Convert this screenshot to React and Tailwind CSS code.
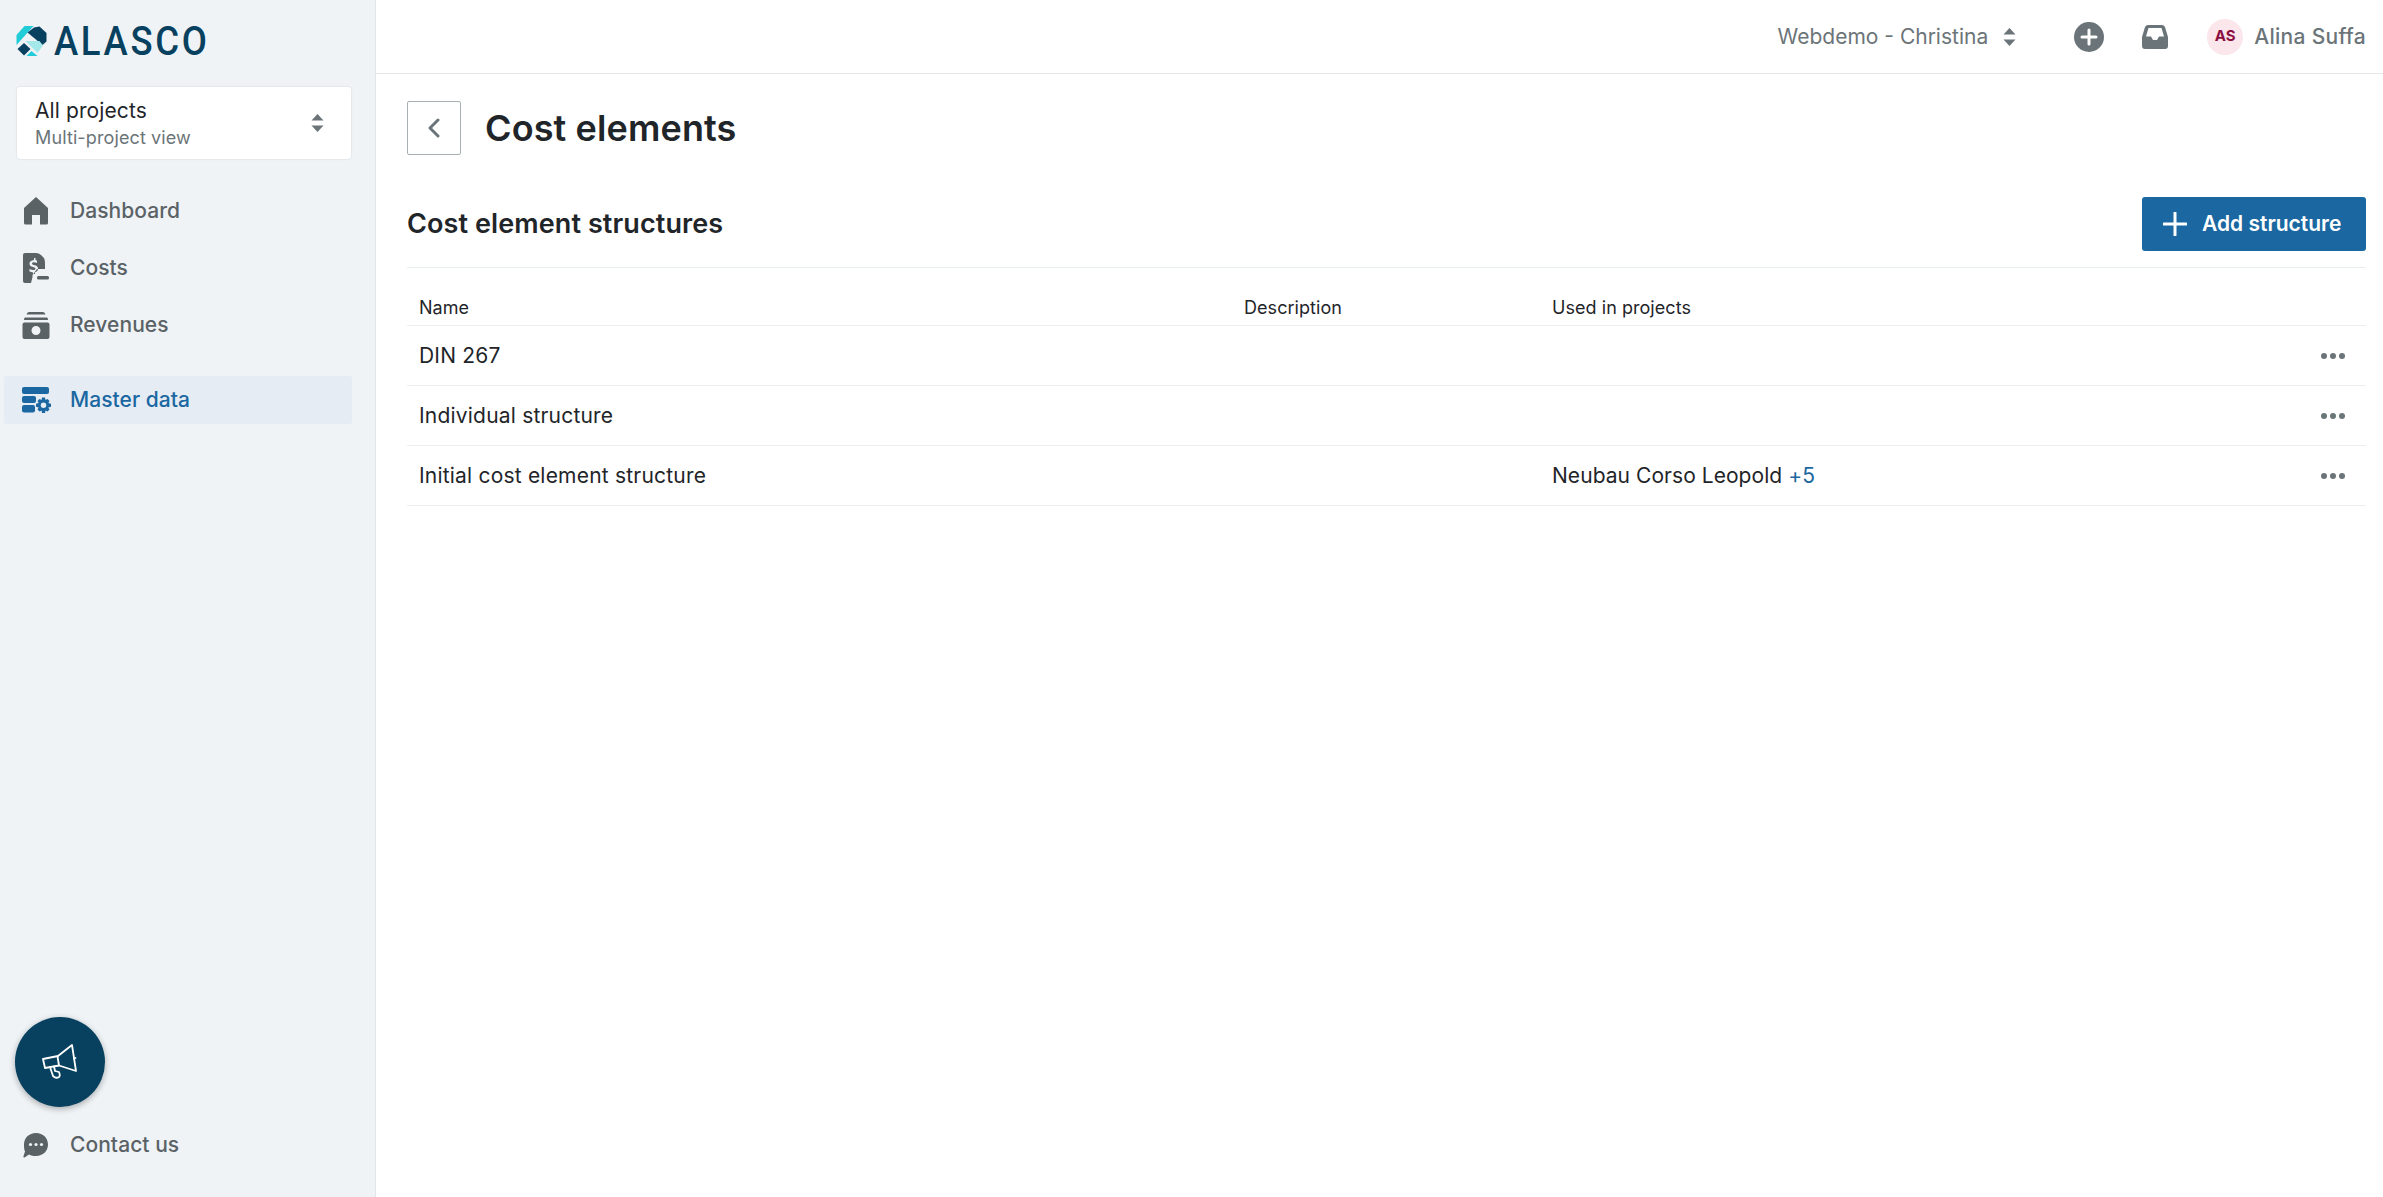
import React from "react";

const font = { fontFamily: "Inter, 'Liberation Sans', sans-serif" };

function Logo() {
  return (
    <div className="flex items-center h-[30px] gap-[7px]">
      <svg width="31" height="30" viewBox="0 0 30 30">
        <polygon points="0,9 8,0 17,0 0,19" fill="#22ccd6" />
        <polygon points="17.5,1.5 23,0.5 30,7 30,15.5 26,19 11,6.5" fill="#07415f" />
        <polygon points="9,15 23,15 26.5,19.5 21,27" fill="#a5e8ea" />
        <polygon points="1,23 7.5,17 14,23 7.5,29.5" fill="#07415f" />
        <polygon points="10,30 15,25 21,30" fill="#22ccd6" />
      </svg>
      <span className="font-['Roboto'] font-medium text-[41px] leading-[30px] tracking-[3px] scale-x-[0.89] origin-left text-[#07415f]">ALASCO</span>
    </div>
  );
}

function Updown({ className }) {
  return (
    <svg className={className} width="13" height="18" viewBox="0 0 13 18" fill="currentColor">
      <path d="M6.5 0 L12.5 6.5 H0.5 Z" />
      <path d="M0.5 11.5 H12.5 L6.5 18 Z" />
    </svg>
  );
}

function HomeIcon() {
  return (
    <svg width="26" height="28" viewBox="0 0 26 28" fill="currentColor">
      <path d="M13 0 L25 11 V26 Q25 27.5 23.500 27.500 H17 V18 H9 V27.500 H2.500 Q1 27.500 1 26 V11 Z" />
    </svg>
  );
}

function CostIcon() {
  return (
    <svg width="26" height="30" viewBox="0 0 26 30" fill="currentColor">
      <path fillRule="evenodd" d="M2 0 H13 Q16 0 18 2 L21 5 Q22 7 22 10 V16 H14 L9.500 22 V24 L8 30 H2 Q0 30 0 28 V2 Q0 0 2 0 Z M11 5 V7 Q6.500 7.500 6.500 10.500 Q6.500 13.500 10 14 Q12.500 14.500 12.500 15.800 Q12.500 17 10.500 17 Q8.500 17 6.500 16 V18.500 Q8.500 19.300 10 19.400 V21 H12 V19.300 Q15 18.500 15 15.800 Q15 13 12 12.300 Q9 11.700 9 10.400 Q9 9.300 10.800 9.300 Q12.500 9.300 14 10 V7.800 Q13 7.200 12.500 7.100 V5 Z" />
      <rect x="14" y="23" width="12" height="3.500" rx="1.500" />
    </svg>
  );
}

function RevenueIcon() {
  return (
    <svg width="28" height="27" viewBox="0 0 28 27" fill="currentColor">
      <path d="M7 0 H21 Q23 0 23.500 2.500 H4.500 Q5 0 7 0 Z" />
      <path d="M3 5.500 H25 Q26 5.500 26 8 H2 Q2 5.500 3 5.500 Z" />
      <path fillRule="evenodd" d="M2.500 10.500 H25.500 Q27.500 10.500 27.500 12.500 V25 Q27.500 27 25.500 27 H2.500 Q0.500 27 0.500 25 V12.500 Q0.500 10.500 2.500 10.500 Z M14 14 A4.500 4.500 0 1 0 14 23 A4.500 4.500 0 1 0 14 14 Z" />
    </svg>
  );
}

function MasterIcon() {
  return (
    <svg width="30" height="26" viewBox="0 0 30 26" fill="currentColor">
      <rect x="1" y="0" width="27" height="7" rx="2" />
      <rect x="1" y="9" width="14" height="7" rx="2" />
      <rect x="1" y="18" width="13" height="7.500" rx="2" />
      <path fillRule="evenodd" d="M21 10.500 H24 L24.500 13 L26.500 12 L28.500 14 L27.300 16 L30 16.800 V19.700 L27.300 20.500 L28.500 22.500 L26.500 24.500 L24.500 23.500 L24 26 H21 L20.500 23.500 L18.500 24.500 L16.500 22.500 L17.700 20.500 L15 19.700 V16.800 L17.700 16 L16.500 14 L18.500 12 L20.500 13 Z M22.500 15.500 A2.700 2.700 0 1 0 22.500 21 A2.700 2.700 0 1 0 22.500 15.500 Z" />
    </svg>
  );
}

function ChatIcon() {
  return (
    <svg width="26" height="25" viewBox="0 0 26 25" fill="currentColor">
      <path fillRule="evenodd" d="M13 0 C20 0 25 5 25 11.500 C25 18 20 23 13 23 C10.500 23 8 22.500 6 21.500 L1.500 24.500 Q0 24.800 0.500 23 L2 18.500 C1 16.500 1 14 1 11.500 C1 5 6 0 13 0 Z" />
      <circle cx="7.500" cy="11.500" r="1.600" fill="#eff3f6" />
      <circle cx="13" cy="11.500" r="1.600" fill="#eff3f6" />
      <circle cx="18.500" cy="11.500" r="1.600" fill="#eff3f6" />
    </svg>
  );
}

function Megaphone() {
  return (
    <svg width="36" height="36" viewBox="0 0 36 36" fill="none" stroke="#fff" strokeWidth="1.800" strokeLinejoin="round" strokeLinecap="round">
      <path d="M1 15 L16 12 L30 1 L34 27 L17 21.500 L3 24 Z" />
      <path d="M15.500 12.500 L17 21.500" />
      <path d="M32 14.500 L33.500 14" />
      <path d="M8 23 L11 32 Q14 35 17 33 Q18.500 31.500 17 28 L13 27 L12 22.500" />
    </svg>
  );
}

function NavItem({ icon, label, active }) {
  return (
    <div className={`flex items-center h-12 ml-[4px] w-[348px] rounded-[3px] ${active ? "bg-[#e5ecf3] text-[#1a67a1]" : "text-[#5a6266]"}`}>
      <span className="w-[66px] flex justify-center pr-[2px]">{icon}</span>
      <span className="text-[21px] font-medium tracking-[0.05px]">{label}</span>
    </div>
  );
}

function Dots() {
  return (
    <svg width="24" height="6" viewBox="0 0 24 6" fill="#6b7478">
      <circle cx="3" cy="3" r="3" />
      <circle cx="12" cy="3" r="3" />
      <circle cx="21" cy="3" r="3" />
    </svg>
  );
}

const rows = [
  { name: "DIN 267" },
  { name: "Individual structure" },
  { name: "Initial cost element structure", used: "Neubau Corso Leopold", more: "+5" },
];

export default function App() {
  return (
    <div className="flex h-[1197px] w-full bg-white text-[#1f2529] overflow-hidden" style={font}>
      <aside className="w-[376px] shrink-0 bg-[#eff3f6] border-r border-[#e2e6e9] flex flex-col justify-between">
        <div>
          <div className="pt-[26px] pl-[16px]"><Logo /></div>
          <div className="mt-[31px] ml-[17px] w-[334px] h-[72px] bg-white rounded-[3px] shadow-[0_0_2px_rgba(0,0,0,0.15)] flex items-center justify-between pl-[18px] pr-[27px]">
            <div>
              <div className="text-[21px] leading-[28px] tracking-[0.1px]">All projects</div>
              <div className="text-[18px] leading-[24px] mt-[1px] tracking-[0.12px] text-[#6b7478]">Multi-project view</div>
            </div>
            <Updown className="text-[#6b7478]" />
          </div>
          <nav className="mt-[28px]">
            <div className="flex flex-col gap-[9px]">
              <NavItem icon={<HomeIcon />} label="Dashboard" />
              <NavItem icon={<CostIcon />} label="Costs" />
              <NavItem icon={<RevenueIcon />} label="Revenues" />
            </div>
            <div className="mt-[27px]">
              <NavItem active icon={<MasterIcon />} label="Master data" />
            </div>
          </nav>
        </div>
        <div className="pb-[28px]">
          <div className="ml-[15px] w-[90px] h-[90px] rounded-full bg-[#07415f] shadow-[0_2px_6px_rgba(0,0,0,0.3)] flex items-center justify-center">
            <Megaphone />
          </div>
          <div className="mt-[14px]">
            <NavItem icon={<ChatIcon />} label="Contact us" />
          </div>
        </div>
      </aside>

      <main className="flex-1 min-w-0 flex flex-col">
        <header className="h-[74px] shrink-0 border-b border-[#e4e7e9] flex items-center justify-end pr-[17px] text-[#6b7478]">
          <span className="text-[21px]">Webdemo - Christina</span>
          <Updown className="ml-[15px]" />
          <svg className="ml-[58px]" width="30" height="30" viewBox="0 0 30 30">
            <circle cx="15" cy="15" r="15" fill="#6b7478" />
            <path d="M15 8 V22 M8 15 H22" stroke="#fff" strokeWidth="3" strokeLinecap="round" />
          </svg>
          <svg className="ml-[38px]" width="26" height="24" viewBox="0 0 26 24" fill="#6b7478">
            <path fillRule="evenodd" d="M6 0 H20 Q22 0 23 2 L26 12 V21 Q26 24 23 24 H3 Q0 24 0 21 V12 L3 2 Q4 0 6 0 Z M6.500 3 L4 11.500 H9 L11 15 H15 L17 11.500 H22 L19.500 3 Z" />
          </svg>
          <div className="ml-[39px] w-[36px] h-[36px] rounded-full bg-[#fbe6ec] text-[#8c0f3f] text-[15px] font-bold flex items-center justify-center">AS</div>
          <span className="ml-[11px] text-[21px] font-medium tracking-[0.3px]">Alina Suffa</span>
        </header>

        <div className="pl-[31px] pr-[17px]">
          <div className="mt-[27px] flex items-center">
            <button className="w-[54px] h-[54px] border border-[#a9b0b4] rounded-[2px] flex items-center justify-center text-[#6b7478]">
              <svg width="12" height="20" viewBox="0 0 12 20" fill="none" stroke="currentColor" strokeWidth="3" strokeLinecap="round" strokeLinejoin="round">
                <path d="M10 2 L2 10 L10 18" />
              </svg>
            </button>
            <h1 className="ml-[24px] text-[36px] font-semibold leading-none tracking-[0.12px]">Cost elements</h1>
          </div>

          <div className="mt-[42px] h-[71px] border-b border-[#e8eeee] flex items-start justify-between">
            <h2 className="text-[27px] font-semibold leading-[54px] tracking-[0.1px]">Cost element structures</h2>
            <button className="w-[224px] h-[54px] rounded-[3px] bg-[#1a67a1] text-white flex items-center pl-[21px]">
              <svg width="24" height="24" viewBox="0 0 24 24" stroke="currentColor" strokeWidth="3" strokeLinecap="round">
                <path d="M12 1 V23 M1 12 H23" />
              </svg>
              <span className="ml-[15px] text-[21px] font-semibold">Add structure</span>
            </button>
          </div>

          <div className="grid grid-cols-[825px_308px_1fr_64px] pl-[12px] h-[58px] items-end pb-[4px] border-b border-[#eceef0] text-[18px] tracking-[0.05px]">
            <span>Name</span>
            <span>Description</span>
            <span>Used in projects</span>
            <span></span>
          </div>
          {rows.map((r) => (
            <div key={r.name} className="grid grid-cols-[825px_308px_1fr_64px] pl-[12px] h-[60px] items-center border-b border-[#eceef0] text-[21px]">
              <span className="tracking-[0.2px]">{r.name}</span>
              <span></span>
              <span className="tracking-[0.05px]">
                {r.used}
                {r.more && <span className="ml-[6px] text-[#1a67a1]">{r.more}</span>}
              </span>
              <span className="flex justify-end pr-[21px]"><Dots /></span>
            </div>
          ))}
        </div>
      </main>
    </div>
  );
}
